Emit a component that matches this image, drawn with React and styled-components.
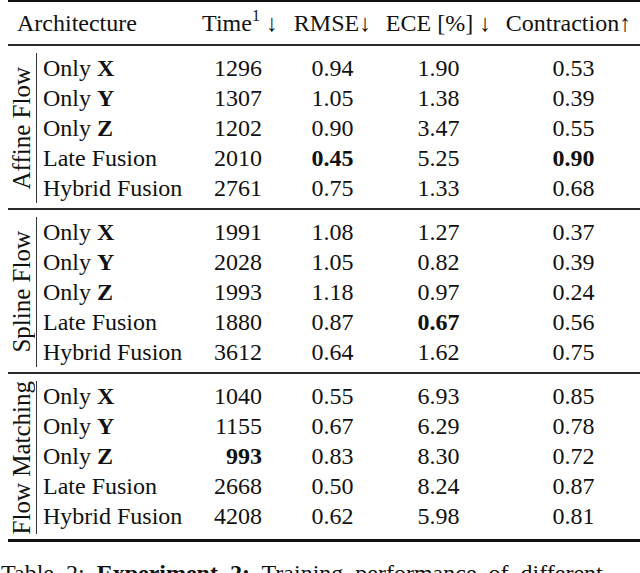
import React from "react";
import styled, { createGlobalStyle } from "styled-components";

const GlobalStyle = createGlobalStyle`
  html, body {
    margin: 0;
    padding: 0;
    background: #ffffff;
    overflow: hidden;
  }
  body {
    padding-left: 8px;
    font-family: "Liberation Serif", "Times New Roman", serif;
    color: #111111;
  }
`;

const COLS = "158px 90px 95px 117px 143px";

const Table = styled.div`
  width: 632px;
  border-top: 2px solid #111;
  border-bottom: 3px solid #111;
  font-size: 24px;
  line-height: 30px;
`;

const HeaderRow = styled.div`
  display: grid;
  grid-template-columns: 187px 90px 95px 117px 143px;
  padding: 6px 0;
  border-bottom: 2px solid #2a2a2a;
  white-space: nowrap;
`;

const HeadCell = styled.div`
  text-align: ${(p) => p.$align || "center"};
  padding-left: ${(p) => p.$pl || 0}px;

  sup {
    font-size: 16px;
    line-height: 0;
    position: relative;
    top: -1px;
  }
`;

const Group = styled.div`
  display: flex;
  padding: 7px 0 5px;

  & + & {
    border-top: 2px solid #2a2a2a;
  }
`;

const GroupLabel = styled.div`
  width: 28px;
  display: flex;
  align-items: center;
  justify-content: center;
  padding-right: 2px;
  box-sizing: border-box;

  span {
    writing-mode: vertical-rl;
    transform: rotate(180deg);
    white-space: nowrap;
    line-height: 1;
    font-size: 25px;
  }
`;

const Rows = styled.div`
  border-left: 1px solid #333;
`;

const Row = styled.div`
  display: grid;
  grid-template-columns: ${COLS};
  height: 30px;
  white-space: nowrap;
`;

const Cell = styled.div`
  text-align: ${(p) => p.$align || "center"};
  padding-left: ${(p) => p.$pl || 0}px;
  padding-right: ${(p) => p.$pr || 0}px;
  font-weight: ${(p) => (p.$bold ? 700 : 400)};
`;

const Caption = styled.div`
  width: 638px;
  margin: 17px 0 0 -7px;
  font-size: 24px;
  line-height: 28px;
  word-spacing: 6px;

  b {
    font-weight: 700;
  }
`;

const groups = [
  {
    name: "Affine Flow",
    rows: [
      ["X", "1296", "0.94", "1.90", "0.53"],
      ["Y", "1307", "1.05", "1.38", "0.39"],
      ["Z", "1202", "0.90", "3.47", "0.55"],
      ["Late Fusion", "2010", "0.45", "5.25", "0.90", [2, 4]],
      ["Hybrid Fusion", "2761", "0.75", "1.33", "0.68"],
    ],
  },
  {
    name: "Spline Flow",
    rows: [
      ["X", "1991", "1.08", "1.27", "0.37"],
      ["Y", "2028", "1.05", "0.82", "0.39"],
      ["Z", "1993", "1.18", "0.97", "0.24"],
      ["Late Fusion", "1880", "0.87", "0.67", "0.56", [3]],
      ["Hybrid Fusion", "3612", "0.64", "1.62", "0.75"],
    ],
  },
  {
    name: "Flow Matching",
    rows: [
      ["X", "1040", "0.55", "6.93", "0.85"],
      ["Y", "1155", "0.67", "6.29", "0.78"],
      ["Z", "993", "0.83", "8.30", "0.72", [1]],
      ["Late Fusion", "2668", "0.50", "8.24", "0.87"],
      ["Hybrid Fusion", "4208", "0.62", "5.98", "0.81"],
    ],
  },
];

const ArchName = ({ name }) =>
  name.length === 1 ? (
    <>
      Only <b>{name}</b>
    </>
  ) : (
    name
  );

export default function App() {
  return (
    <>
      <GlobalStyle />
      <Table>
        <HeaderRow>
          <HeadCell $align="left" $pl={9}>Architecture</HeadCell>
          <HeadCell>
            Time<sup>1</sup> ↓
          </HeadCell>
          <HeadCell>RMSE↓</HeadCell>
          <HeadCell>ECE [%] ↓</HeadCell>
          <HeadCell>Contraction↑</HeadCell>
        </HeaderRow>
        {groups.map((g) => (
          <Group key={g.name}>
            <GroupLabel>
              <span>{g.name}</span>
            </GroupLabel>
            <Rows>
              {g.rows.map(([arch, time, rmse, ece, con, bold = []]) => (
                <Row key={arch}>
                  <Cell $align="left" $pl={6}>
                    <ArchName name={arch} />
                  </Cell>
                  <Cell $align="right" $pr={23} $bold={bold.includes(1)}>
                    {time}
                  </Cell>
                  <Cell $bold={bold.includes(2)}>{rmse}</Cell>
                  <Cell $bold={bold.includes(3)}>{ece}</Cell>
                  <Cell $pl={10} $bold={bold.includes(4)}>
                    {con}
                  </Cell>
                </Row>
              ))}
            </Rows>
          </Group>
        ))}
      </Table>
      <Caption>
        Table 2: <b>Experiment 2:</b> Training performance of different
        architectures
      </Caption>
    </>
  );
}
